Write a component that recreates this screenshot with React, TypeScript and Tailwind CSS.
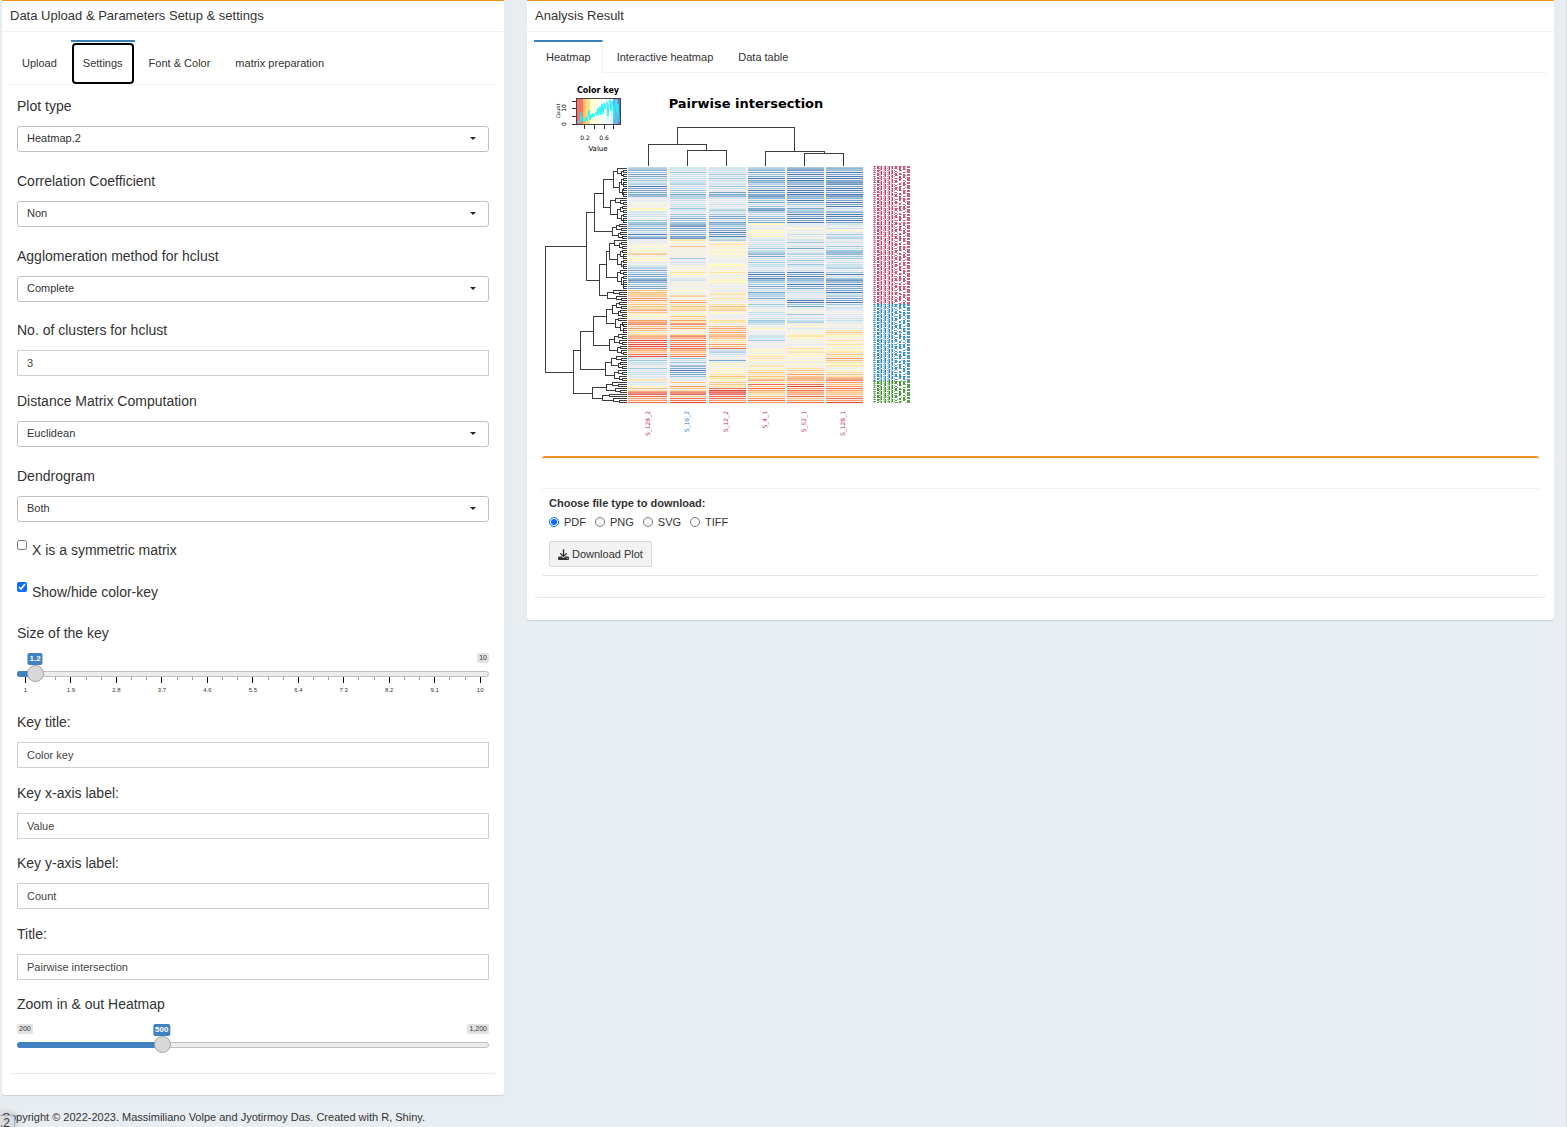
import { useState } from "react";
import type { CSSProperties, ReactNode } from "react";
import { FaDownload } from "react-icons/fa6";

/* ---------- heatmap data ---------- */

const PALETTE: Record<string, string> = {
  A: "#4079b4",
  B: "#6ba4cb",
  C: "#93c8de",
  D: "#bfe2ec",
  E: "#dcebf0",
  F: "#eef3dc",
  G: "#fdfab6",
  H: "#fde394",
  I: "#fcc273",
  J: "#f99a58",
  K: "#ee6a42",
  L: "#e4452f",
  M: "#c22a2b",
};

const COLUMNS = [
  {
    x: 628,
    w: 39,
    cells:
      "CBCBBCCDCABBBBBEEFFFGGDDDFCCBCBCDACAEEFGFGFIFGGEFDCBCBBCABCBB" +
      "IIIIJJHIIHJIGGFJJKIJIHHJJLKLLKJIKLDCDDECEDDEEHDEGIHKLKJJK",
  },
  {
    x: 670,
    w: 36,
    cells:
      "DDCDDDDDCDDCCBCCDEDDCDECCBCCBABBCBBAHGFIFFFFFCEDEFFGHGFEDFFFF" +
      "GFFIFIJHIHIGGIHJHKIJGFHKJKJKKKJIJKCDCEBBABBCEEIFJIHKLIKKL",
  },
  {
    x: 709,
    w: 37,
    cells:
      "DDDCDCDEDCDEBBBDEEDEECDCBBDBBCBBABADCGHGFGFGFFEFGGFGHFFFGGFEF" +
      "EFHFHFFHIHIGFEFHHFIJIJIJIHHJIKDCDEFBEGFGFGHIHGIIHKLLLKKJKL",
  },
  {
    x: 748,
    w: 37,
    cells:
      "CBBCBABBCBCABBABCBDCBACDCBCBGFEGGFGEDEDDCDCBBDDCDDEDBABABCCBC" +
      "DBCCBDECDEFDDEDCCDFGFEEDDCEFEFGFGHHGFFHGHIHIHJHKIKJIHIJKJM",
  },
  {
    x: 787,
    w: 37,
    cells:
      "BABABAABBABAAABBABCDBCBABABAEEGEFDEFDCEDBEECDDCDCDEDABABBCABB" +
      "DDEEDAACBEFFCEDDCFGEFFGHGFFEFHGHGGFGEGFHIHJIJJIKLJKJJKIJKM",
  },
  {
    x: 826,
    w: 37,
    cells:
      "BBABAABAABAABAABBABADEBAABABDEDGECDCEDECDCBBCCEDDDCECADCABABB" +
      "BADCBBACEDEFEEDDEFFEHIHGFHGHGFGHIHJIHGHFGHIHJKJIJKJIIJKJLM",
  },
];

const ROWS = 118;
const TOP = 167;

type Tree = { x: number; leaves: number } | { x: number; kids: [Tree, Tree] };

const ROW_TREE: Tree = {
  x: 545,
  kids: [
    {
      x: 586,
      kids: [
        {
          x: 594,
          kids: [
            { x: 603, kids: [{ x: 613, leaves: 15 }, { x: 610, leaves: 13 }] },
            { x: 612, leaves: 8 },
          ],
        },
        {
          x: 599,
          kids: [
            { x: 606, kids: [{ x: 609, leaves: 15 }, { x: 617, leaves: 10 }] },
            { x: 607, leaves: 6 },
          ],
        },
      ],
    },
    {
      x: 573,
      kids: [
        {
          x: 580,
          kids: [
            { x: 593, kids: [{ x: 606, leaves: 16 }, { x: 609, leaves: 11 }] },
            { x: 605, leaves: 13 },
          ],
        },
        { x: 592, kids: [{ x: 606, leaves: 6 }, { x: 602, leaves: 5 }] },
      ],
    },
  ],
};

function rowDendrogram(): string {
  const parts: string[] = [];
  let leaf = 0;

  // Draws a cluster of n leaves and returns the height at which it joins its parent.
  const cluster = (x: number, n: number): number => {
    if (n === 1) {
      const y = TOP + 1 + 2 * leaf;
      leaf += 1;
      return y;
    }
    const first = Math.max(1, Math.floor(n * (leaf % 3 === 0 ? 0.35 : 0.55)));
    const near = Math.min(623, x + Math.max(2, Math.round((626 - x) * 0.3)));
    const far = Math.min(623, x + Math.max(2, Math.round((626 - x) * 0.45)));
    const a = cluster(near, first);
    const b = cluster(far, n - first);
    const ax = first === 1 ? 626 : near;
    const bx = n - first === 1 ? 626 : far;
    parts.push(`M${ax} ${a}H${x}V${b}H${bx}`);
    return Math.round((a + b) / 2);
  };

  const walk = (t: Tree): number => {
    if ("leaves" in t) return cluster(t.x, t.leaves);
    const a = walk(t.kids[0]);
    const b = walk(t.kids[1]);
    parts.push(`M${t.kids[0].x} ${a}H${t.x}V${b}H${t.kids[1].x}`);
    return Math.round((a + b) / 2);
  };

  walk(ROW_TREE);
  return parts.join("");
}

const ROW_PATH = rowDendrogram();

const LABEL_BLOCKS = [
  { color: "#c4375f", y0: 166, y1: 304 },
  { color: "#1f7fc8", y0: 304, y1: 381 },
  { color: "#2f8a1c", y0: 381, y1: 403 },
];

const LABEL_STROKES = [
  { x: 873, w: 3, dash: "1 1", o: 0.55 },
  { x: 874, w: 1, dash: "2 1 1 1", o: 0.7 },
  { x: 877, w: 2, dash: "3 1 2 1", o: 0.9 },
  { x: 879, w: 1, dash: "1 1", o: 0.6 },
  { x: 880, w: 1, dash: "1 0", o: 0.4 },
  { x: 881, w: 1, dash: "4 1", o: 0.95 },
  { x: 883, w: 1, dash: "1 1", o: 0.5 },
  { x: 884, w: 1, dash: "1 0", o: 0.45 },
  { x: 885, w: 1, dash: "5 1", o: 0.95 },
  { x: 887, w: 1, dash: "1 1", o: 0.5 },
  { x: 888, w: 1, dash: "1 0", o: 0.45 },
  { x: 889, w: 1, dash: "4 1", o: 0.95 },
  { x: 891, w: 1, dash: "1 0", o: 0.45 },
  { x: 892, w: 1, dash: "3 1 4 1", o: 0.95 },
  { x: 894, w: 1, dash: "1 1", o: 0.6 },
  { x: 895, w: 2, dash: "3 2 1 1", o: 0.85 },
  { x: 897, w: 1, dash: "1 2", o: 0.6 },
  { x: 899, w: 2, dash: "5 2 2 1", o: 0.85 },
  { x: 901, w: 1, dash: "1 3", o: 0.6 },
  { x: 903, w: 2, dash: "4 2 1 1", o: 0.85 },
  { x: 905, w: 1, dash: "1 2", o: 0.6 },
  { x: 907, w: 3, dash: "2 1 4 1", o: 0.8 },
];

const COLUMN_LABELS = [
  { x: 650, text: "S_128_2", color: "#c0335c" },
  { x: 689, text: "S_16_2", color: "#1f7fc8" },
  { x: 728, text: "S_12_2", color: "#c0335c" },
  { x: 767, text: "S_4_1", color: "#c0335c" },
  { x: 806, text: "S_52_1", color: "#c0335c" },
  { x: 845, text: "S_128_1", color: "#c0335c" },
];

const KEY_BANDS = [
  { x: 576, w: 7, fill: "#fb6f66" },
  { x: 583, w: 3, fill: "#fdc56b" },
  { x: 586, w: 4, fill: "#fedd7e" },
  { x: 590, w: 8, fill: "#fffedb" },
  { x: 598, w: 8, fill: "#fbfef4" },
  { x: 606, w: 7, fill: "#e2f6fe" },
  { x: 613, w: 5, fill: "#62b7ea" },
  { x: 618, w: 2, fill: "#7672b4" },
];

function HeatmapPlot() {
  return (
    <svg
      width="380"
      height="366"
      viewBox="542 80 380 366"
      className="block font-['DejaVu_Sans']"
      role="img"
      aria-label="Pairwise intersection heatmap"
    >
      {/* colour key */}
      <text x="598" y="93" textAnchor="middle" fontSize="8" fontWeight="700">
        Color key
      </text>
      {KEY_BANDS.map((b) => (
        <rect key={b.x} x={b.x} y="98" width={b.w} height="26" fill={b.fill} />
      ))}
      <rect x="576.5" y="98.5" width="44" height="26" fill="none" stroke="#444" />
      <polyline
        points="577,123 579,121 580,123 581,112 582,121 583,118 584,122 586,117 587,121 588,116 589,110 590,120 591,114 592,118 593,113 594,117 596,112 597,116 598,108 599,115 600,106 601,115 602,104 603,114 604,103 605,109 606,105 607,102 608,116 609,104 610,100 611,111 612,101 613,106 614,119 615,106 616,101 617,113 618,104 619,122"
        fill="none"
        stroke="#1ff4fb"
        strokeWidth="1"
      />
      <path
        d="M584.5 125v4M594.5 125v4M604.5 125v4M613.5 125v4M576 124.5h-4M576 116.5h-4M576 108.5h-4M576 101.5h-4"
        stroke="#333"
      />
      <g fontSize="6" textAnchor="middle">
        <text x="585" y="140">0.2</text>
        <text x="604" y="140">0.6</text>
        <text x="598" y="151" fontSize="7">Value</text>
        <text transform="translate(566 124) rotate(-90)">0</text>
        <text transform="translate(566 108) rotate(-90)">10</text>
        <text transform="translate(560 111) rotate(-90)" fontSize="5">Count</text>
      </g>

      <text x="746" y="108" textAnchor="middle" fontSize="13" fontWeight="700">
        Pairwise intersection
      </text>

      {/* dendrograms */}
      <g fill="none" stroke="#3c3c3c" shapeRendering="crispEdges">
        <path d="M677.5 144.5V127.5H794.5V151.5M648.5 166V144.5H706.5V150.5M687.5 166V150.5H726.5V166M765.5 166V151.5H824.5V153.5M804.5 166V153.5H843.5V166" />
        <path d={ROW_PATH} transform="translate(.5 .5)" />
      </g>

      {/* cells */}
      <rect x="628" y="167" width="236" height="237" fill="#f8f0f2" />
      {COLUMNS.map((c) => (
        <g key={c.x}>
          {Array.from({ length: ROWS }, (_, r) => {
            const fill = PALETTE[c.cells[r] ?? "H"];
            return (
              <g key={r} fill={fill}>
                <rect x={c.x} y={TOP + 2 * r} width={c.w} height="1" opacity={r % 7 < 2 ? 0.55 : 0.04} />
                <rect x={c.x} y={TOP + 2 * r + 1} width={c.w} height="1" opacity={r % 7 < 2 ? 0.75 : 0.95} />
              </g>
            );
          })}
        </g>
      ))}

      {/* row labels, overplotted until only their strokes remain */}
      {LABEL_BLOCKS.map((b) =>
        LABEL_STROKES.map((s) => (
          <path
            key={b.y0 + "-" + s.x}
            d={`M${s.x + s.w / 2} ${b.y0}V${b.y1}`}
            stroke={b.color}
            strokeWidth={s.w}
            strokeDasharray={s.dash}
            opacity={s.o}
          />
        )),
      )}

      {COLUMN_LABELS.map((l) => (
        <text key={l.x} transform={`translate(${l.x} 411) rotate(-90)`} textAnchor="end" fontSize="6" fill={l.color}>
          {l.text}
        </text>
      ))}
    </svg>
  );
}

/* ---------- form controls ---------- */

function Label({ htmlFor, children }: { htmlFor: string; children: ReactNode }) {
  return (
    <label htmlFor={htmlFor} className="mb-[10px] block text-sm leading-5 text-[#333]">
      {children}
    </label>
  );
}

function SelectField({ id, label, options, className }: { id: string; label: string; options: string[]; className: string }) {
  return (
    <div className={className}>
      <Label htmlFor={id}>{label}</Label>
      <div className="relative">
        <select
          id={id}
          className="block h-[26px] w-full appearance-none rounded-[3px] border border-[#c2c2c2] bg-white pr-6 pb-px pl-[9px] text-[11px] text-[#333]"
        >
          {options.map((o) => (
            <option key={o}>{o}</option>
          ))}
        </select>
        <svg width="6" height="3" viewBox="0 0 6 3" className="pointer-events-none absolute top-[11px] right-[13px]">
          <path d="M0 0h6L3 3z" fill="#222" />
        </svg>
      </div>
    </div>
  );
}

function TextField({ id, label, value, className }: { id: string; label: string; value: string; className: string }) {
  return (
    <div className={className}>
      <Label htmlFor={id}>{label}</Label>
      <input
        id={id}
        defaultValue={value}
        className="block h-[26px] w-full border border-[#ccd0d9] bg-white px-[9px] text-[11px] text-[#444]"
      />
    </div>
  );
}

function CheckField({ id, label, checked, className }: { id: string; label: string; checked: boolean; className: string }) {
  return (
    <div className={className}>
      <input id={id} type="checkbox" defaultChecked={checked} className="size-[10px] shrink-0 accent-[#0d6bff]" />
      <label htmlFor={id} className="text-sm leading-5 text-[#333]">
        {label}
      </label>
    </div>
  );
}

type SliderProps = {
  id: string;
  label: string;
  min: number;
  max: number;
  step: number;
  initial: number;
  showMin: boolean;
  ticks: string[];
};

function SliderField({ id, label, min, max, step, initial, showMin, ticks }: SliderProps) {
  const [value, setValue] = useState(initial);
  const ratio = (value - min) / (max - min);
  const at: CSSProperties = { left: `${ratio * 100}%` };
  return (
    <div>
      <label htmlFor={id} className="block text-sm leading-5 text-[#333]">
        {label}
      </label>
      <div className="relative mt-[10px] flex h-3 justify-between text-[7px] leading-[10px] text-[#333]">
        <span className={showMin ? "h-[10px] rounded-[2px] bg-[#e2e2e2] px-0.5" : "invisible"}>{min.toLocaleString("en-US")}</span>
        <span className="h-[10px] rounded-[2px] bg-[#e2e2e2] px-0.5">{max.toLocaleString("en-US")}</span>
        <div className="absolute inset-x-2 top-0">
          <span
            className="absolute -translate-x-1/2 rounded-[2px] bg-[#3f81c1] px-0.5 text-[8px] leading-3 font-bold text-white"
            style={at}
          >
            {value}
          </span>
        </div>
      </div>
      <div className="grid h-[17px] items-center">
        <div className="col-start-1 row-start-1 h-[6px] overflow-hidden rounded-full border border-[#bfbfbf] bg-[#ececec]" />
        <div className="col-start-1 row-start-1 h-[6px] overflow-hidden rounded-full">
          <div className="h-full bg-[#3f81c1]" style={{ width: `${(ratio * 0.96 + 0.02) * 100}%` }} />
        </div>
        <input
          id={id}
          type="range"
          min={min}
          max={max}
          step={step}
          value={value}
          onChange={(e) => setValue(Number(e.target.value))}
          className="z-10 col-start-1 row-start-1 m-0 h-[17px] w-full appearance-none bg-transparent [&::-webkit-slider-thumb]:size-[17px] [&::-webkit-slider-thumb]:appearance-none [&::-webkit-slider-thumb]:rounded-full [&::-webkit-slider-thumb]:border [&::-webkit-slider-thumb]:border-[#a3a3a3] [&::-webkit-slider-thumb]:bg-[#d9d9d9]"
        />
      </div>
      {ticks.length > 0 && (
        <div className="-mt-[5px] flex h-[17px] justify-between px-2">
          {Array.from({ length: (ticks.length - 1) * 3 + 1 }, (_, i) => (
            <span key={i} className="flex w-px flex-col items-center">
              <span className={i % 3 === 0 ? "h-[6px] w-px shrink-0 bg-black" : "h-[3px] w-px shrink-0 bg-[#999]"} />
              {i % 3 === 0 && <span className="mt-[3px] text-[6px] leading-[8px] text-[#333]">{ticks[i / 3]}</span>}
            </span>
          ))}
        </div>
      )}
    </div>
  );
}

/* ---------- page ---------- */

function Box({ title, className, children }: { title: string; className: string; children: ReactNode }) {
  return (
    <section className={className}>
      <h3 className="border-b border-[#f1f1f1] px-2 pt-[5px] pb-[5px] text-[13px] leading-5 text-[#333]">{title}</h3>
      {children}
    </section>
  );
}

const SIZE_TICKS = ["1", "1.9", "2.8", "3.7", "4.6", "5.5", "6.4", "7.3", "8.2", "9.1", "10"];

export default function App() {
  return (
    <div className="relative min-h-screen overflow-hidden border-r border-[#dadde2] bg-[#e8edf1] pr-3 pl-0.5 font-['Liberation_Sans',Arial,sans-serif] text-[11px] text-[#333]">
      <main className="grid grid-cols-3 items-start gap-x-[23px]">
        <Box
          title="Data Upload & Parameters Setup & settings"
          className="rounded-b-[3px] border-t border-[#ef9226] bg-white pb-[22px] shadow-[0_1px_1px_rgba(0,0,0,0.12)]"
        >
          <div className="mx-2 mt-2 rounded-b-[3px] shadow-[0_1px_1px_rgba(0,0,0,0.1)]">
            <nav className="flex h-[45px] border-b border-[#f1f1f1]">
              <button className="mt-0.5 mr-[3px] pr-[11px] pl-3">Upload</button>
              <button className="-mb-px mr-[3px] flex border-t-2 border-[#3c80b8] bg-white px-px pt-px">
                <span className="flex h-[41px] items-center rounded-[4px] border-2 border-black px-[9px]">Settings</span>
              </button>
              <button className="mt-0.5 mr-[3px] px-[11px]">Font &amp; Color</button>
              <button className="mt-0.5 px-[11px]">matrix preparation</button>
            </nav>
            <form className="px-[7px] pt-[11px] pb-5">
              <SelectField id="plot" label="Plot type" options={["Heatmap.2"]} className="mb-[19px]" />
              <SelectField id="corr" label="Correlation Coefficient" options={["Non"]} className="mb-[19px]" />
              <SelectField id="agg" label="Agglomeration method for hclust" options={["Complete"]} className="mb-[18px]" />
              <TextField id="clusters" label="No. of clusters for hclust" value="3" className="mb-[15px]" />
              <SelectField id="dist" label="Distance Matrix Computation" options={["Euclidean"]} className="mb-[19px]" />
              <SelectField id="dendro" label="Dendrogram" options={["Both"]} className="mb-[18px]" />
              <CheckField id="sym" label="X is a symmetric matrix" checked={false} className="mb-[22px] flex items-start gap-[5px]" />
              <CheckField id="ck" label="Show/hide color-key" checked={true} className="mb-[21px] flex items-start gap-[5px]" />
              <div className="mb-[18px]">
                <SliderField id="size" label="Size of the key" min={1} max={10} step={0.1} initial={1.2} showMin={false} ticks={SIZE_TICKS} />
              </div>
              <TextField id="kt" label="Key title:" value="Color key" className="mb-[15px]" />
              <TextField id="kx" label="Key x-axis label:" value="Value" className="mb-[14px]" />
              <TextField id="ky" label="Key y-axis label:" value="Count" className="mb-[15px]" />
              <TextField id="title" label="Title:" value="Pairwise intersection" className="mb-[14px]" />
              <SliderField id="zoom" label="Zoom in & out Heatmap" min={200} max={1200} step={10} initial={500} showMin={true} ticks={[]} />
            </form>
          </div>
        </Box>

        <Box
          title="Analysis Result"
          className="col-span-2 rounded-b-[3px] border-t border-[#ef9226] bg-white pb-[23px] shadow-[0_1px_1px_rgba(0,0,0,0.12)]"
        >
          <div className="mx-2 mt-2 rounded-b-[3px] shadow-[0_1px_1px_rgba(0,0,0,0.1)]">
            <nav className="flex h-[33px] border-b border-[#f1f1f1]">
              <button className="-mb-px mr-[3px] -ml-px border-t-2 border-r border-t-[#3c80b8] border-r-[#f1f1f1] bg-white pr-[11px] pl-3">
                Heatmap
              </button>
              <button className="mt-0.5 mr-[3px] px-[11px]">Interactive heatmap</button>
              <button className="mt-0.5 px-[11px]">Data table</button>
            </nav>
            <div className="px-[7px] pt-[7px] pb-[22px]">
              <HeatmapPlot />
              <div className="mt-[10px] rounded-[3px] border-t-2 border-[#ef9226] shadow-[0_1px_1px_rgba(0,0,0,0.12)]">
                <div className="h-[31px] border-b border-[#f1f1f1]" />
                <div className="px-[7px] pt-1 pb-2">
                  <fieldset>
                    <legend className="leading-5 font-bold">Choose file type to download:</legend>
                    <div className="flex h-[18px] items-center gap-[9px]">
                      {["PDF", "PNG", "SVG", "TIFF"].map((t, i) => (
                        <label key={t} className="flex items-center gap-[5px]">
                          <input type="radio" name="filetype" defaultChecked={i === 0} className="size-[10px] accent-[#0d6bff]" />
                          {t}
                        </label>
                      ))}
                    </div>
                  </fieldset>
                  <button className="mt-[10px] flex h-[26px] items-center gap-[3px] rounded-[2px] border border-[#d9d9d9] bg-[#f2f2f2] px-2">
                    <FaDownload size={11} />
                    Download Plot
                  </button>
                </div>
              </div>
            </div>
          </div>
        </Box>
      </main>
      <footer className="pt-3 leading-5">
        Copyright © 2022-2023. Massimiliano Volpe and Jyotirmoy Das. Created with R, Shiny.
      </footer>
      <div className="absolute bottom-0 left-0 h-[12px] w-[15px] overflow-hidden rounded-tr-[3px] border-t border-r border-[#a9adb1] bg-[#d9dcdf] text-[12px] leading-[14px] text-[#333] shadow-[0_0_8px_rgba(0,0,0,0.3)]">
        .2
      </div>
    </div>
  );
}
